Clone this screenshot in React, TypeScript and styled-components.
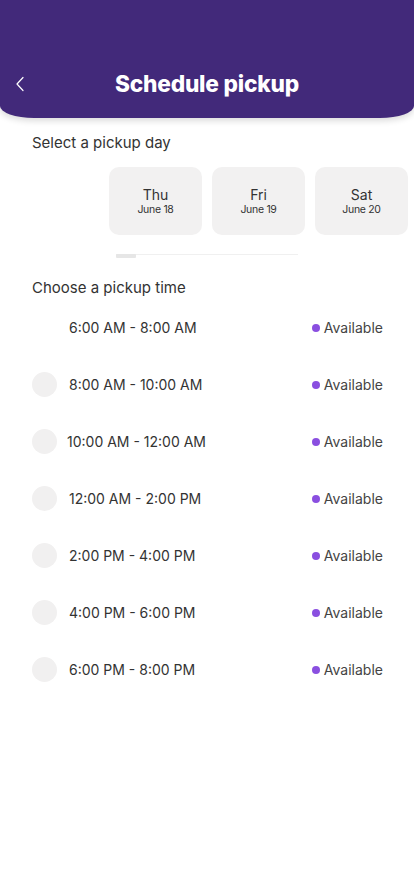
import React from "react";
import styled, { createGlobalStyle } from "styled-components";

const Global = createGlobalStyle`
  html, body { margin: 0; padding: 0; background: #fff; }
  body { font-family: "Inter", "Noto Sans", sans-serif; color: #333; }
  * { box-sizing: border-box; }
`;

const Page = styled.div`
  width: 414px;
  min-height: 896px;
  background: #fff;
  overflow: hidden;
`;

const Header = styled.header`
  position: relative;
  height: 118px;
  background: #42297a;
  border-radius: 0 0 34px 34px / 0 0 12px 12px;
  box-shadow: 0 3px 6px rgba(0, 0, 0, 0.14);
  display: flex;
  align-items: flex-end;
  justify-content: center;
  padding-bottom: 19px;
`;

const BackButton = styled.button`
  position: absolute;
  left: 12px;
  bottom: 24px;
  width: 16px;
  height: 20px;
  padding: 0;
  border: 0;
  background: none;
  display: flex;
  align-items: center;
  justify-content: center;
`;

const Title = styled.h1`
  margin: 0;
  font-family: "Inter", sans-serif;
  font-weight: 800;
  font-size: 22.7px;
  line-height: 30px;
  color: #fff;
  letter-spacing: -0.2px;
`;

const SectionLabel = styled.div<{ $top: number }>`
  margin: ${(p) => p.$top}px 0 0 32px;
  font-size: 15px;
  line-height: 20px;
  color: #333;
`;

const DayScroller = styled.div`
  margin-top: 14px;
  display: flex;
  gap: 10px;
  padding-left: 109px;
  overflow: hidden;
`;

const DayCard = styled.div`
  flex: 0 0 93px;
  height: 68px;
  border-radius: 10px;
  background: #f2f1f1;
  display: flex;
  flex-direction: column;
  align-items: center;
  justify-content: center;
`;

const DayName = styled.div`
  font-size: 14px;
  line-height: 17px;
  color: #333;
`;

const DayDate = styled.div`
  font-size: 10.5px;
  line-height: 14px;
  color: #333;
  letter-spacing: -0.3px;
`;

const ScrollTrack = styled.div`
  margin: 19px 0 0 116px;
  width: 182px;
  height: 4px;
  display: flex;
  align-items: center;
  border-top: 1px solid #f0f0f0;
`;

const ScrollThumb = styled.div`
  width: 20px;
  height: 4px;
  margin-top: -1px;
  background: #e6e6e6;
  border-radius: 1px;
`;

const TimeList = styled.div`
  margin-top: 1px;
  display: flex;
  flex-direction: column;
`;

const TimeRow = styled.div`
  height: 57px;
  display: flex;
  align-items: center;
  padding: 0 31px 0 32px;
`;

const Radio = styled.div<{ $hidden?: boolean }>`
  width: 25px;
  height: 25px;
  border-radius: 50%;
  background: ${(p) => (p.$hidden ? "transparent" : "#f1f0f0")};
  flex: 0 0 auto;
`;

const TimeText = styled.div<{ $shift: number }>`
  margin-left: ${(p) => 12 + p.$shift}px;
  font-size: 14px;
  color: #333;
  flex: 1;
`;

const Status = styled.div`
  display: flex;
  align-items: center;
  gap: 4px;
  font-size: 14px;
  color: #444;
`;

const Dot = styled.span`
  width: 8px;
  height: 8px;
  border-radius: 50%;
  background: #8a4fe0;
`;

const days = [
  { name: "Thu", date: "June 18" },
  { name: "Fri", date: "June 19" },
  { name: "Sat", date: "June 20" },
];

const times = [
  { t: "6:00 AM - 8:00 AM", hidden: true, shift: 0 },
  { t: "8:00 AM - 10:00 AM", shift: 0 },
  { t: "10:00 AM - 12:00 AM", shift: -2 },
  { t: "12:00 AM - 2:00 PM", shift: 0 },
  { t: "2:00 PM - 4:00 PM", shift: 0 },
  { t: "4:00 PM - 6:00 PM", shift: 0 },
  { t: "6:00 PM - 8:00 PM", shift: 0 },
];

export default function App() {
  return (
    <Page>
      <Global />
      <Header>
        <BackButton aria-label="Back">
          <svg width="10" height="16" viewBox="0 0 10 16" fill="none">
            <path d="M8 1.5 L2 8 L8 14.5" stroke="#fff" strokeWidth="1.2" strokeLinecap="round" strokeLinejoin="round" />
          </svg>
        </BackButton>
        <Title>Schedule pickup</Title>
      </Header>
      <SectionLabel $top={15}>Select a pickup day</SectionLabel>
      <DayScroller>
        {days.map((d) => (
          <DayCard key={d.name}>
            <DayName>{d.name}</DayName>
            <DayDate>{d.date}</DayDate>
          </DayCard>
        ))}
      </DayScroller>
      <ScrollTrack>
        <ScrollThumb />
      </ScrollTrack>
      <SectionLabel $top={20}>Choose a pickup time</SectionLabel>
      <TimeList>
        {times.map((r) => (
          <TimeRow key={r.t}>
            <Radio $hidden={r.hidden} />
            <TimeText $shift={r.shift}>{r.t}</TimeText>
            <Status>
              <Dot />
              Available
            </Status>
          </TimeRow>
        ))}
      </TimeList>
    </Page>
  );
}
